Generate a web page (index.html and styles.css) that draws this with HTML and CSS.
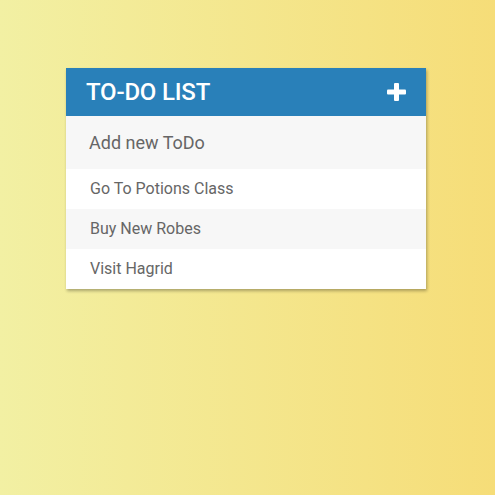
FILE: index.html
```html
<!DOCTYPE html>
<html>
<head>
<meta charset="utf-8">
<link rel="stylesheet" href="styles.css">
</head>
<body>
<div class="card">
  <div class="header">
    <h1 class="title">To-Do List</h1>
    <svg class="plus" width="19" height="18" viewBox="0 0 19 18"><rect x="7" y="0" width="5" height="18" rx="1" fill="#fff"/><rect x="0" y="6.5" width="19" height="5" rx="1" fill="#fff"/></svg>
  </div>
  <div class="add">Add new ToDo</div>
  <ul class="list">
    <li class="item">Go To Potions Class</li>
    <li class="item alt">Buy New Robes</li>
    <li class="item">Visit Hagrid</li>
  </ul>
</div>
</body>
</html>
```
FILE: styles.css
```css
html, body {
  margin: 0;
  height: 100%;
}
body {
  background: linear-gradient(to right, #f2f0a3, #f6dd78);
  font-family: Roboto, "Noto Sans", sans-serif;
  padding: 68px 0 0 66px;
  box-sizing: border-box;
}
.card {
  width: 360px;
  background: #fff;
  box-shadow: 1px 2px 3px rgba(0, 0, 0, 0.3);
}
.header {
  height: 48px;
  background: #2980b9;
  display: flex;
  align-items: center;
  justify-content: space-between;
  padding: 0 20px 0 20px;
}
.title {
  margin: 0;
  color: #fff;
  font-size: 24px;
  font-weight: 500;
  text-transform: uppercase;
  letter-spacing: -0.2px;
}
.plus {
  display: block;
}
.add {
  height: 53px;
  background: #f7f7f7;
  color: #666;
  font-size: 18px;
  display: flex;
  align-items: center;
  padding-left: 23px;
}
.list {
  list-style: none;
  margin: 0;
  padding: 0;
}
.item {
  height: 40px;
  line-height: 40px;
  padding-left: 24px;
  color: #666;
  font-size: 16px;
  background: #fff;
}
.item.alt {
  background: #f7f7f7;
}
```
